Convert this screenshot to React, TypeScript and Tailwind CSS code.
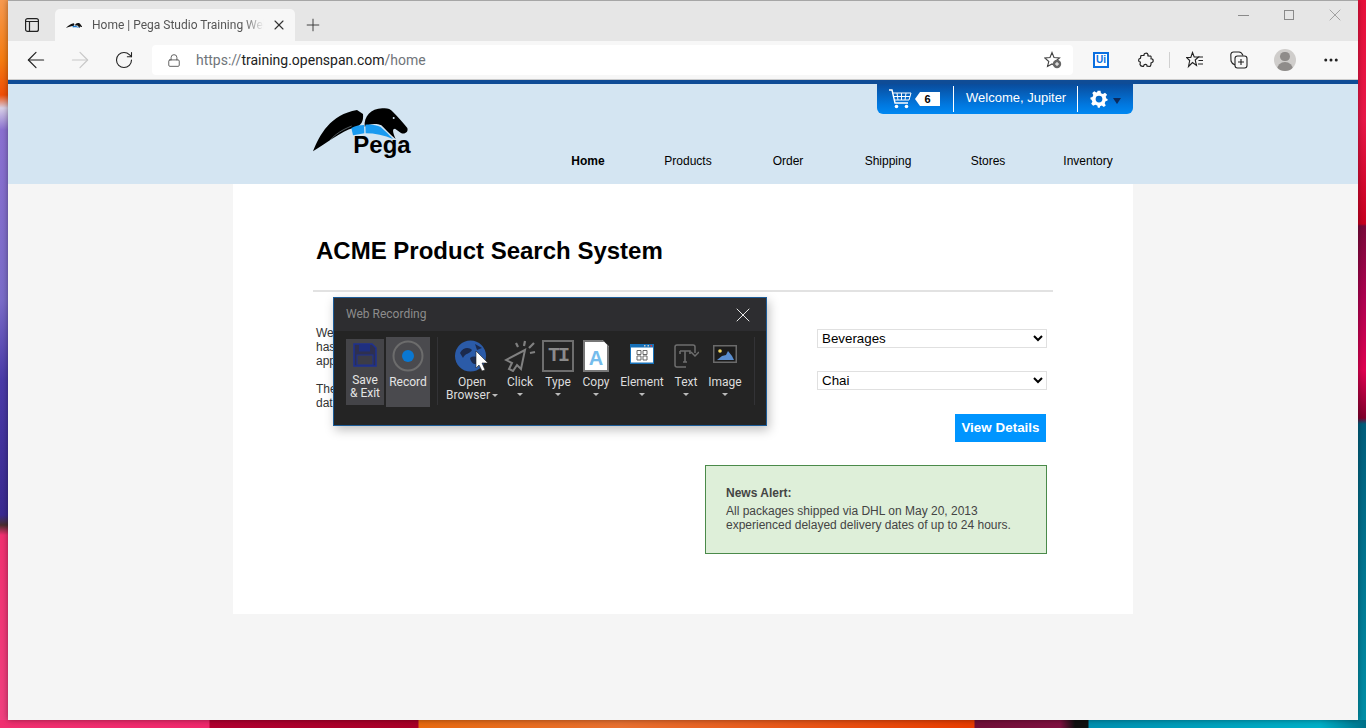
import React from 'react';
import { ArrowLeft, ArrowRight, Lock, MoreHorizontal, Plus, RotateCw, X } from 'lucide-react';

const navItems = ['Home', 'Products', 'Order', 'Shipping', 'Stores', 'Inventory'];

const PegaMark = ({ className }: { className?: string }) => (
  <svg viewBox="40 70 300 150" className={className}>
    <path d="M40 200C60 150 92 90 172 76L190 88C192 110 186 124 160 130C125 140 85 172 40 200Z" fill="#000" />
    <path d="M92 166C108 148 126 136 156 124" stroke="#d4e5f2" strokeWidth="2" strokeOpacity="0.6" fill="none" />
    <path d="M195 126C192 96 214 70 250 71C262 70 272 72 280 82C296 98 310 114 323 130C327 142 315 150 304 145L286 132C278 132 278 140 288 163C270 148 255 132 245 122C232 116 210 116 195 126Z" fill="#000" />
    <circle cx="282" cy="100" r="3" fill="#d4e5f2" />
    <path d="M155 130C168 123 182 121 193 121L194 146L160 152Z" fill="#1a9af0" />
    <path d="M197 120C215 118 232 122 243 127C256 138 268 150 280 163C255 152 225 146 198 146Z" fill="#1a9af0" />
    <text x="161" y="206" fontSize="72" fontWeight="700" fontFamily="'Liberation Sans', Arial, sans-serif" fill="#000">
      Pega
    </text>
  </svg>
);

const FavMark = () => (
  <svg viewBox="40 70 300 92" className="w-[17px] h-[9px]">
    <path d="M40 160C70 130 112 90 175 78L188 88C187 108 180 122 158 126C125 134 85 140 40 160Z" fill="#111" />
    <path d="M196 122C198 92 230 68 262 72C285 75 300 102 322 130C326 140 316 148 305 143L284 130L286 162C268 146 252 130 245 118L196 118Z" fill="#111" />
    <path d="M155 126C168 118 230 112 280 161C255 150 205 144 160 150Z" fill="#1a7ad0" />
  </svg>
);

const ToolItem = ({
  label,
  second,
  width,
  caret = true,
  children
}: {
  label: string;
  second?: string;
  width: string;
  caret?: boolean;
  children: React.ReactNode;
}) => (
  <div className={`flex flex-col items-center shrink-0 ${width}`}>
    <div className="h-[34px] flex items-center justify-center">{children}</div>
    <div className="mt-[3px] text-[12px] leading-[13px] text-[#dcdcdc] whitespace-nowrap text-center">
      <div>{label}</div>
      {second && (
        <div className="flex items-center justify-center">
          {second}
          <span className="ml-[2px] w-0 h-0 border-x-[3px] border-x-transparent border-t-[3px] border-t-[#bbb]" />
        </div>
      )}
    </div>
    {caret && !second && <span className="mt-[4px] w-0 h-0 border-x-[3px] border-x-transparent border-t-[3px] border-t-[#bbb]" />}
  </div>
);

const WebRecording = () => (
  <div className="absolute left-[100px] top-[113px] w-[434px] h-[129px] border border-[#1c5c98] bg-[#242424] shadow-[2px_4px_10px_rgba(0,0,0,0.25)] font-['Roboto',sans-serif]">
    <div className="h-[33px] bg-[#2d2d30] flex items-center justify-between pl-[12px] pr-[11px]">
      <span className="text-[12px] text-[#8c8c8c] pb-[2px]">Web Recording</span>
      <X className="w-[24px] h-[24px] text-[#e8e8e8]" strokeWidth={1} />
    </div>
    <div className="flex items-start pl-[12px] pt-[6px]">
      <div className="mt-[2px] w-[38px] h-[66px] bg-[#444448] flex flex-col items-center text-[12px] leading-[13px] text-[#e4e4e4] text-center">
        <svg viewBox="0 0 24 24" className="w-[24px] h-[24px] mt-[4px] mb-[7px]">
          <path d="M1 1H19L23 5V23H1Z" fill="#2e3050" stroke="#1e3090" strokeWidth="1.5" />
          <rect x="6" y="1.5" width="11" height="7" fill="#1e2f80" />
          <rect x="4" y="12" width="16" height="10" fill="#3c3c46" stroke="#1e3090" />
        </svg>
        <span>Save</span>
        <span>&amp; Exit</span>
      </div>
      <div className="ml-[2px] w-[44px] h-[70px] bg-[#4a4a4e] flex flex-col items-center text-[12px] leading-[13px] text-[#e4e4e4]">
        <svg viewBox="0 0 32 32" className="w-[32px] h-[32px] mt-[3px] mb-[4px]">
          <circle cx="16" cy="16" r="14.5" fill="none" stroke="#6c6c6c" strokeWidth="2" />
          <circle cx="16" cy="16" r="6" fill="#0a78d2" />
        </svg>
        <span>Record</span>
      </div>
      <div className="ml-[7px] w-px h-[68px] bg-[#333336]" />
      <div className="ml-[8px] flex items-start pt-[2px]">
        <ToolItem label="Open" second="Browser" width="w-[52px]" caret={false}>
          <svg viewBox="0 0 34 32" className="w-[34px] h-[32px]">
            <circle cx="15.5" cy="16" r="15.5" fill="#2b5ba8" />
            <path d="M5 13C9 6 15 8 17 10C15 14 10 13 8 18ZM15 18C19 15 24 17 25 22C21 26 16 24 15 18ZM20 4L27 8L22 10Z" fill="#1c2a4c" />
            <path d="M21 11L33 23L27 23L30 30L27 31L24 25L21 28Z" fill="#fff" stroke="#222" strokeWidth="0.6" />
          </svg>
        </ToolItem>
        <ToolItem label="Click" width="ml-[6px] w-[32px]">
          <svg viewBox="0 0 32 32" className="w-[32px] h-[32px]" fill="none" stroke="#808080" strokeWidth="2">
            <path d="M21 10L2 20L8 23L5 29L9 31L13 25L17 29Z" />
            <path d="M20 6L21 1M25 8L30 3M26 13L31 12M14 7L12 3" strokeWidth="2.2" />
          </svg>
        </ToolItem>
        <ToolItem label="Type" width="ml-[5px] w-[34px]">
          <div className="w-[32px] h-[32px] border-2 border-[#6e6e6e] flex items-center justify-center font-['Liberation_Mono',monospace] font-bold text-[20px] leading-none text-[#8a8a8a] tracking-[-2px]">
            TI
          </div>
        </ToolItem>
        <ToolItem label="Copy" width="ml-[4px] w-[34px]">
          <div className="relative w-[26px] h-[32px] bg-white border-2 border-[#777] flex items-end justify-center [clip-path:polygon(0_0,75%_0,100%_20%,100%_100%,0_100%)]">
            <span className="font-['Liberation_Sans',sans-serif] font-bold text-[20px] leading-[24px] text-[#74bcec]">A</span>
          </div>
        </ToolItem>
        <ToolItem label="Element" width="ml-[7px] w-[44px]">
          <svg viewBox="0 0 24 20" className="w-[24px] h-[20px] mb-[4px]">
            <rect width="24" height="20" fill="#1670b8" />
            <rect x="1" y="3.5" width="22" height="15" fill="#fff" />
            <rect x="14" y="1" width="1.5" height="1.5" fill="#ccc" />
            <rect x="17.5" y="1" width="1.5" height="1.5" fill="#ccc" />
            <rect x="20.5" y="1" width="1.5" height="1.5" fill="#e33" />
            <path d="M7 6.5h4v4H7zM13 6.5h4v4h-4zM7 12h4v4H7zM13 12h4v4h-4z" fill="none" stroke="#666" />
          </svg>
        </ToolItem>
        <ToolItem label="Text" width="ml-[6px] w-[32px]">
          <svg viewBox="0 0 25 24" className="w-[25px] h-[24px]" fill="none" stroke="#6e6e6e" strokeWidth="1.5">
            <path d="M12 23H3Q1 23 1 21V3Q1 1 3 1H19Q21 1 21 3V9" />
            <path d="M17 8L21 12L25 8" />
            <path d="M6 7H16V10M6 7V10M11 7V18M9 18H13" strokeWidth="1.6" />
          </svg>
        </ToolItem>
        <ToolItem label="Image" width="ml-[6px] w-[34px]">
          <svg viewBox="0 0 24 18" className="w-[24px] h-[18px] mb-[5px]">
            <rect x="0.75" y="0.75" width="22.5" height="16.5" fill="#1c1c1c" stroke="#6a6a6a" strokeWidth="1.5" />
            <circle cx="7" cy="6" r="1.8" fill="#f2d860" />
            <path d="M4 15L9 11L13 10L15 6L19 11L21 15Z" fill="#5a8ed0" />
          </svg>
        </ToolItem>
      </div>
      <div className="ml-[12px] w-px h-[68px] bg-[#333336]" />
    </div>
  </div>
);

const BrowserChrome = () => (
  <>
    <div className="h-[41px] bg-[#e6e6e6] border-t border-[#a6a6a6] flex items-end relative">
      <div className="absolute left-[17px] top-[17px]">
        <svg viewBox="0 0 14 14" className="w-[14px] h-[14px]" fill="none" stroke="#222" strokeWidth="1.2">
          <rect x="0.6" y="0.6" width="12.8" height="12.8" rx="2" />
          <path d="M0.6 3.5H13.4M4.5 3.5V13.4" />
        </svg>
      </div>
      <div className="ml-[47px] w-[240px] h-[32px] bg-[#f7f7f7] rounded-t-[5px] flex items-center pl-[11px] pr-[8px] font-['Roboto',sans-serif]">
        <FavMark />
        <span className="ml-[9px] text-[12px] text-[#555] whitespace-nowrap overflow-hidden w-[172px] [mask-image:linear-gradient(90deg,#000_88%,transparent)]">Home | Pega Studio Training Web</span>
        <X className="ml-auto w-[16px] h-[16px] text-[#333]" strokeWidth={1.7} />
      </div>
      <Plus className="ml-[8px] mb-[6px] w-[20px] h-[20px] text-[#333]" strokeWidth={1.1} />
      <div className="ml-auto flex self-start mt-[4px] text-[#8a8a8a]">
        <div className="w-[46px] h-[20px] flex items-center justify-center">
          <span className="w-[11px] h-px bg-[#8a8a8a]" />
        </div>
        <div className="w-[46px] h-[20px] flex items-center justify-center">
          <span className="w-[10px] h-[10px] border border-[#8a8a8a]" />
        </div>
        <div className="w-[46px] h-[20px] flex items-center justify-center">
          <X className="w-[20px] h-[20px]" strokeWidth={0.9} />
        </div>
      </div>
    </div>
    <div className="h-[39px] bg-[#f7f7f7] border-b border-[#cccccc] flex items-center pl-[15px] relative">
      <ArrowLeft className="w-[26px] h-[26px] text-[#222]" strokeWidth={1.1} />
      <ArrowRight className="ml-[18px] w-[26px] h-[26px] text-[#c8c8c8]" strokeWidth={1.1} />
      <RotateCw className="ml-[21px] w-[20px] h-[20px] text-[#222]" strokeWidth={1.3} />
      <div className="ml-[18px] w-[921px] h-[30px] bg-white rounded-[4px] flex items-center pl-[15px] pr-[11px] font-['Roboto',sans-serif]">
        <Lock className="w-[14px] h-[15px] text-[#444]" strokeWidth={1.4} />
        <span className="ml-[15px] text-[14px] text-[#70757a]">
          https://<span className="text-[#222]">training.openspan.com</span>/home
        </span>
        <svg viewBox="0 0 18 18" className="ml-auto w-[18px] h-[18px]">
          <path d="M8 1.5L10 6.5L15.5 7L11.3 10.5L12.5 15.5L8 13L3.5 15.5L4.8 10.5L0.8 7L6 6.5Z" fill="none" stroke="#444" strokeWidth="1.1" />
          <circle cx="13" cy="13" r="4.2" fill="#666" />
          <path d="M13 11V15M11 13H15" stroke="#fff" />
        </svg>
      </div>
      <div className="ml-[20px] w-[16px] h-[16px] bg-[#0a6fe0] flex items-center justify-center">
        <span className="w-[12px] h-[12px] bg-white flex items-center justify-center font-['Liberation_Sans',sans-serif] font-bold text-[10px] leading-none text-[#0a6fe0]">Ui</span>
      </div>
      <svg viewBox="0 0 16 16" className="ml-[29px] w-[16px] h-[16px]" fill="none" stroke="#222" strokeWidth="1.2" strokeLinejoin="round">
        <path d="M3 3.5H6C5.5 1 9.5 .2 10 2.8C10.2 3.3 10 3.5 9.8 3.8L12.8 4.2C13.2 4.3 13.2 5.5 13 6.8C15.8 6.3 16 11 13 10.8C13.2 12 13 13.5 12 14.5L9 14.2C9.4 12 6 11.5 5.5 14.3C4 14.6 2.5 14 2 12.5L2.4 10C0 10 0 6.4 2.4 6.3Z" />
      </svg>
      <span className="ml-[15px] w-px h-[16px] bg-[#d0d0d0]" />
      <svg viewBox="0 0 18 18" className="ml-[16px] w-[18px] h-[18px]" fill="none" stroke="#222" strokeWidth="1.1">
        <path d="M6.5 1.5L8.2 6H12.5L9.2 9L10.5 14.5L6.5 11.5L2.5 15.5L3.7 9.5L0.5 6.5H4.8Z" />
        <path d="M12 6H17M12.5 9.5H17M12 13H17" />
      </svg>
      <svg viewBox="0 0 18 18" className="ml-[26px] w-[18px] h-[18px]" fill="none" stroke="#222" strokeWidth="1.1">
        <path d="M5 14C3 13 1.5 12 1 10L0.8 3.5C1 2 2 1 3.5 1H9C11 1 12 2 13 4.5" />
        <rect x="5" y="5" width="12" height="12" rx="2.5" />
        <path d="M11 8V14M8 11H14" />
      </svg>
      <div className="ml-[26px] w-[22px] h-[22px] rounded-full bg-[#cfcdcb] overflow-hidden flex flex-col items-center">
        <span className="mt-[3px] w-[10px] h-[10px] rounded-full bg-[#8f8c8a]" />
        <span className="mt-[1px] w-[16px] h-[10px] rounded-t-full bg-[#8f8c8a]" />
      </div>
      <MoreHorizontal className="ml-[26px] w-[18px] h-[18px] text-[#222]" strokeWidth={2} />
    </div>
  </>
);

const PageHeader = () => (
  <div className="h-[104px] bg-[#d4e5f2] border-t-4 border-[#0f4c96] shrink-0">
    <div className="w-[900px] mx-auto flex">
      <div className="w-[305px] shrink-0 pl-[80px] pt-[24px]">
        <PegaMark className="w-[100px] h-[50px]" />
      </div>
      <div className="w-[600px] shrink-0 flex flex-col">
        <div className="ml-[339px] w-[256px] h-[30px] rounded-b-[6px] bg-[linear-gradient(180deg,#0a4c9c_0%,#0078e0_70%,#0088f2_100%)] flex items-center text-white font-['Liberation_Sans',sans-serif]">
          <svg viewBox="0 0 24 20" className="ml-[11px] w-[24px] h-[20px]" fill="none" stroke="#fff" strokeWidth="1.4">
            <path d="M1 1H4L7 14H20" />
            <path d="M4.5 4H23L21 11H6.2M9 4L10 11M13.5 4V11M18 4L17 11M5.5 7.5H22" strokeWidth="1" />
            <circle cx="8.5" cy="17.5" r="1.8" fill="#fff" stroke="none" />
            <circle cx="18.5" cy="17.5" r="1.8" fill="#fff" stroke="none" />
          </svg>
          <div className="ml-[3px] w-[25px] h-[14px] bg-white flex items-center justify-center text-[11px] font-bold text-black [clip-path:polygon(0_50%,20%_0,100%_0,100%_100%,20%_100%)]">
            6
          </div>
          <span className="ml-[13px] w-px h-[26px] bg-white" />
          <span className="ml-[12px] pb-[2px] text-[13px] font-normal whitespace-nowrap">Welcome, Jupiter</span>
          <span className="ml-[11px] w-px h-[26px] bg-white" />
          <svg viewBox="0 0 24 24" className="ml-[12px] w-[18px] h-[18px]" fill="#fff">
            <path fillRule="evenodd" d="M10 1H14L14.6 4.3L17.3 5.4L20 3.5L22.8 6.3L20.9 9L22 11.7L23.4 12V14L20.7 15L19.6 17.7L21 20.5L18.4 22.5L15.7 20.8L13.5 21.7L13 23.5H10.5L9.7 20.7L7 19.6L4.2 21L1.6 18.4L3.2 15.7L2 13L0.6 12.4V10L3.3 9.3L4.4 6.6L3 3.9L5.7 1.6L8.4 3.2L9.7 2.6ZM12 7.5A4.5 4.5 0 1 0 12 16.5A4.5 4.5 0 1 0 12 7.5Z" />
          </svg>
          <span className="ml-[5px] mt-[3px] w-0 h-0 border-x-[4px] border-x-transparent border-t-[6px] border-t-[#0b2a5c]" />
        </div>
        <nav className="mt-[39px] flex font-['Liberation_Sans',sans-serif] text-[12px] leading-[16px] text-black">
          {navItems.map((item) => (
            <a key={item} className={`w-[100px] text-center ${item === 'Home' ? 'font-bold' : ''}`}>
              {item}
            </a>
          ))}
        </nav>
      </div>
    </div>
  </div>
);

const ProductSearch = () => (
  <div className="relative w-[900px] h-[430px] mx-auto bg-white font-['Liberation_Sans',sans-serif]">
    <h1 className="pl-[83px] pt-[53px] text-[24px] leading-[28px] font-bold text-black">ACME Product Search System</h1>
    <div className="ml-[80px] mt-[25px] w-[740px] h-[2px] bg-[#e2e2e2]" />
    <div className="flex">
      <div className="ml-[83px] pt-[34px] text-[12px] leading-[14px] text-[#333]">
        <p>We</p>
        <p>has</p>
        <p>app</p>
        <p className="mt-[14px]">The</p>
        <p>dat</p>
      </div>
      <div className="ml-auto mr-[86px] w-[342px] flex flex-col items-end pt-[37px]">
        <select className="w-[230px] h-[19px] border border-[#e0e0e0] bg-white text-[13.33px] text-black" defaultValue="Beverages">
          <option>Beverages</option>
        </select>
        <select className="mt-[23px] w-[230px] h-[19px] border border-[#e0e0e0] bg-white text-[13.33px] text-black" defaultValue="Chai">
          <option>Chai</option>
        </select>
        <button className="mt-[24px] mr-px w-[91px] h-[28px] bg-[#0095ff] text-white text-[13.33px] font-bold tracking-[0.05px]">View Details</button>
        <div className="mt-[23px] w-[342px] h-[89px] border border-[#4a8a4a] bg-[#deefd9] pl-[20px] pt-[20px] text-[12px] leading-[14px] text-[#444]">
          <p className="font-bold mb-[4px]">News Alert:</p>
          <p>All packages shipped via DHL on May 20, 2013</p>
          <p>experienced delayed delivery dates of up to 24 hours.</p>
        </div>
      </div>
    </div>
    <WebRecording />
  </div>
);

export default function App() {
  return (
    <div className="w-[1366px] h-[728px] overflow-hidden flex flex-col">
      <div className="flex h-[720px]">
        <div className="w-[8px] bg-[linear-gradient(180deg,#f79a50_0,#f57c10_60px,#f04e08_95px,#d8d0e8_108px,#8a70d0_130px,#7a6cc8_300px,#4a3aa8_380px,#3a2a90_515px,#4a3030_525px,#f03070_535px,#f0407f_100%)]" />
        <div className="w-[1350px] flex flex-col bg-[#f5f5f5] shadow-[0_0_6px_rgba(0,0,0,0.4)] z-10">
          <BrowserChrome />
          <PageHeader />
          <ProductSearch />
        </div>
        <div className="w-[8px] bg-[linear-gradient(180deg,#e8103a_0,#e81848_120px,#c8001f_224px,#7a0a3a_226px,#b00050_300px,#e00050_370px,#80002c_418px,#005e7c_424px,#0090a8_100%)]" />
      </div>
      <div className="h-[8px] bg-[linear-gradient(90deg,#f03070_0,#f0286c_209px,#b00030_210px,#a80028_418px,#e86a10_419px,#e87030_620px,#e83c00_974px,#701038_975px,#801040_1060px,#101010_1075px,#101010_1088px,#0090b0_1089px,#00b0c8_1320px,#007088_100%)]" />
    </div>
  );
}
